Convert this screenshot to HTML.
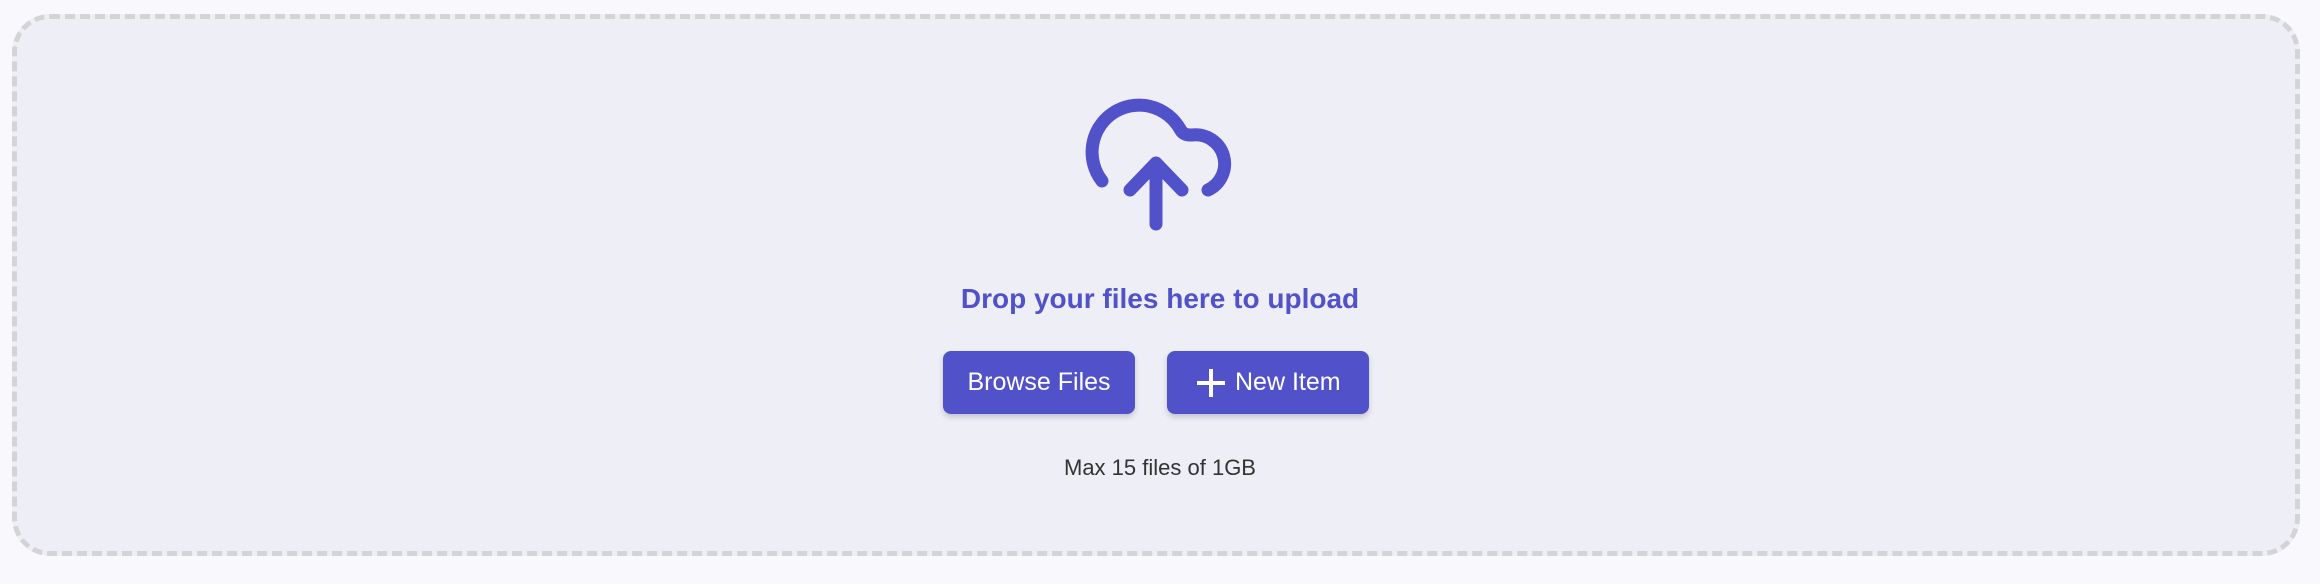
<!DOCTYPE html>
<html><head><style>
html,body{margin:0;padding:0;width:2320px;height:584px;background:#f9f9fd;overflow:hidden;font-family:"Liberation Sans",sans-serif}
.box{position:absolute;left:12px;top:14px;width:2278px;height:532px;border:5px dashed #d4d4d6;border-radius:38px;background:#eeeef7}
.t{position:absolute;left:0;width:2320px;text-align:center}
.btn{position:absolute;top:351px;height:63px;background:#5151c9;border-radius:8px;color:#fff;font-size:25px;line-height:63px;text-align:center;box-shadow:0 3px 6px rgba(0,0,0,.18)}
</style></head><body>
<div class="box"></div>
<div class="t" style="top:283px;font-size:28px;font-weight:bold;color:#5151c9;">Drop your files here to upload</div>
<div class="btn" style="left:943px;width:192px;">Browse Files</div>
<div class="btn" style="left:1167px;width:202px;"><span style="padding-left:68px;display:block;text-align:left">New Item</span></div>
<div class="t" style="top:455px;font-size:22px;color:#333;">Max 15 files of 1GB</div>
<svg width="2320" height="584" style="position:absolute;left:0;top:0;z-index:5" fill="none" stroke="#5151c9" stroke-width="13" stroke-linecap="round" stroke-linejoin="round">
<path d="M1102 183 A47 47 0 1 1 1180 131 Q1183 137 1190 137 L1192 137 A29 29 0 0 1 1208 192" transform="translate(0,-2)"/>
<path d="M1130 190 L1156 163 L1182 190 M1156 163 L1156 224"/>
<path d="M1211 369 v28 M1197 383 h28" stroke="#fff" stroke-width="4" stroke-linecap="butt"/>
</svg>
</body></html>
